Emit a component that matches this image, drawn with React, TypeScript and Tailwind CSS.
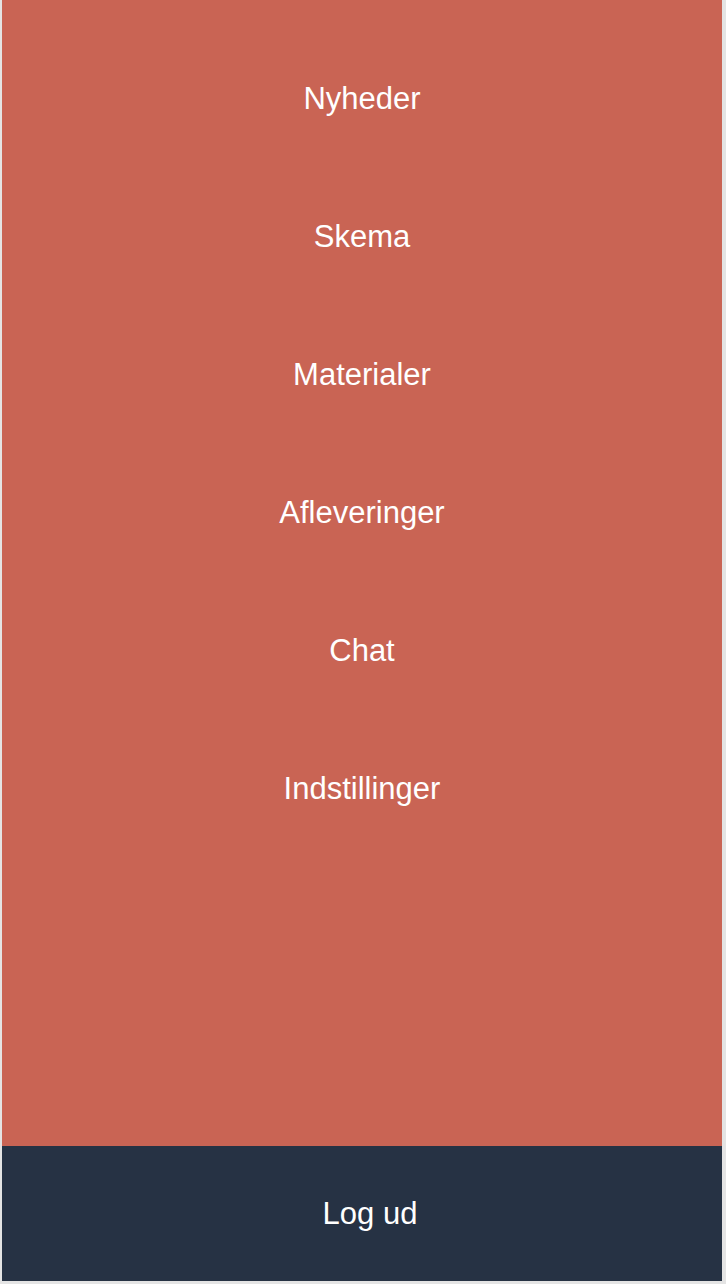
export default function App() {
  const items = ['Nyheder', 'Skema', 'Materialer', 'Afleveringer', 'Chat', 'Indstillinger'];

  return (
    <div className="w-[726px] h-[1284px] bg-[#e4e4e4] pl-[2px] pr-[4px] pb-[3px] font-['Liberation_Sans',Arial,sans-serif]">
      <div className="h-full flex flex-col">
        {/* Menu */}
        <nav className="flex-1 bg-[#c96454] pt-[29px] flex flex-col">
          {items.map((item) => (
            <a
              key={item}
              className="h-[138px] flex items-center justify-center text-white text-[31px] leading-none"
            >
              {item}
            </a>
          ))}
        </nav>

        {/* Logout */}
        <div className="h-[135px] bg-[#263244] flex items-center justify-center pl-[16px] text-white text-[31px] leading-none">
          Log ud
        </div>
      </div>
    </div>
  );
}
